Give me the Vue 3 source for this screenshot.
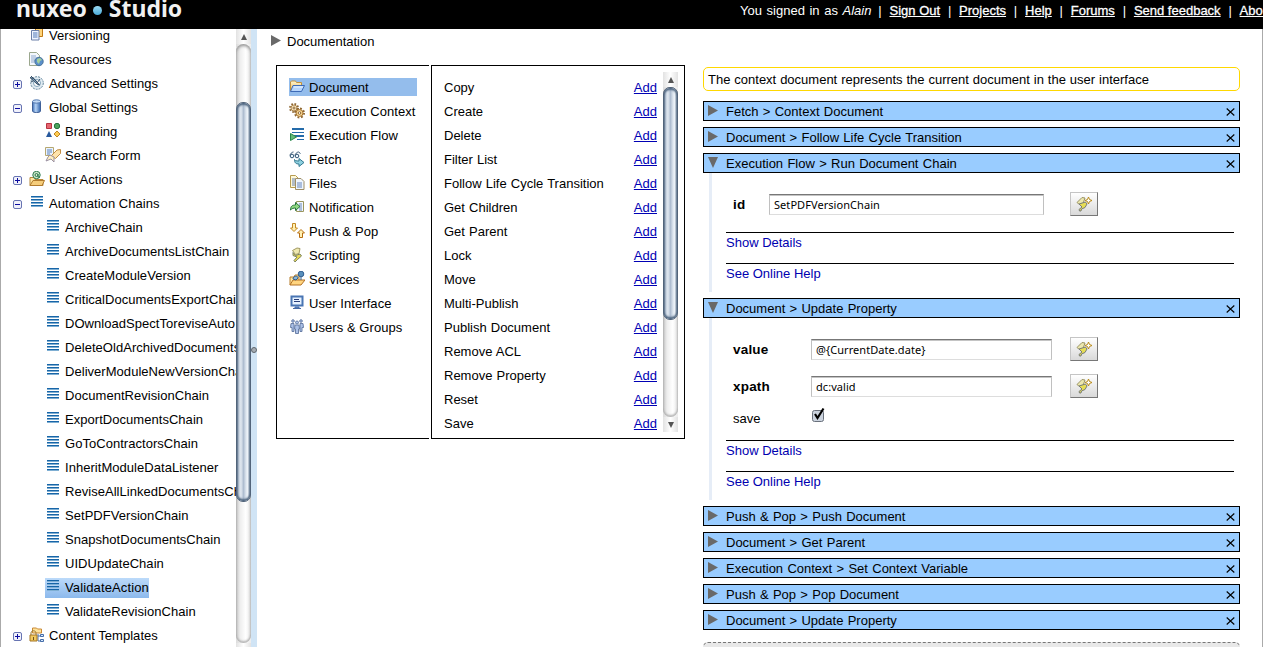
<script setup>
const tree = [
  { label: 'Versioning', icon: 'versioning', level: 1 },
  { label: 'Resources', icon: 'resources', level: 1 },
  { label: 'Advanced Settings', icon: 'compass', level: 1, toggle: 'plus' },
  { label: 'Global Settings', icon: 'cylinder', level: 1, toggle: 'minus' },
  { label: 'Branding', icon: 'branding', level: 2 },
  { label: 'Search Form', icon: 'search', level: 2 },
  { label: 'User Actions', icon: 'useractions', level: 1, toggle: 'plus' },
  { label: 'Automation Chains', icon: 'chain', level: 1, toggle: 'minus' },
  ...['ArchiveChain', 'ArchiveDocumentsListChain', 'CreateModuleVersion', 'CriticalDocumentsExportChain',
    'DOwnloadSpectToreviseAuto', 'DeleteOldArchivedDocuments', 'DeliverModuleNewVersionChain',
    'DocumentRevisionChain', 'ExportDocumentsChain', 'GoToContractorsChain', 'InheritModuleDataListener',
    'ReviseAllLinkedDocumentsChain', 'SetPDFVersionChain', 'SnapshotDocumentsChain', 'UIDUpdateChain',
    'ValidateAction', 'ValidateRevisionChain'].map(label => ({ label, icon: 'chain', level: 2 })),
  { label: 'Content Templates', icon: 'templates', level: 1, toggle: 'plus' },
]
const categories = [
  ['Document', 'folder'], ['Execution Context', 'gears'], ['Execution Flow', 'flow'], ['Fetch', 'fetch'],
  ['Files', 'files'], ['Notification', 'notification'], ['Push & Pop', 'pushpop'], ['Scripting', 'script'],
  ['Services', 'services'], ['User Interface', 'screen'], ['Users & Groups', 'users'],
]
const operations = ['Copy', 'Create', 'Delete', 'Filter List', 'Follow Life Cycle Transition', 'Get Children',
  'Get Parent', 'Lock', 'Move', 'Multi-Publish', 'Publish Document', 'Remove ACL', 'Remove Property', 'Reset', 'Save']
const links = ['Sign Out', 'Projects', 'Help', 'Forums', 'Send feedback', 'About']
const steps = [
  { title: 'Fetch > Context Document' },
  { title: 'Document > Follow Life Cycle Transition' },
  { title: 'Execution Flow > Run Document Chain', kind: 'single', fields: [['id', 'SetPDFVersionChain']] },
  { title: 'Document > Update Property', kind: 'multi', fields: [['value', '@{CurrentDate.date}'], ['xpath', 'dc:valid']], check: 'save' },
  { title: 'Push & Pop > Push Document' },
  { title: 'Document > Get Parent' },
  { title: 'Execution Context > Set Context Variable' },
  { title: 'Push & Pop > Pop Document' },
  { title: 'Document > Update Property' },
]
</script>

<template>
  <svg class="defs" width="0" height="0">
    <defs>
      <linearGradient id="gold" x1="0" y1="0" x2="0" y2="1"><stop offset="0" stop-color="#fff6d0" /><stop offset="1" stop-color="#e9b95c" /></linearGradient>
      <linearGradient id="blue" x1="0" y1="0" x2="1" y2="0"><stop offset="0" stop-color="#3d6fb8" /><stop offset=".4" stop-color="#b4d2f4" /><stop offset="1" stop-color="#3365ad" /></linearGradient>
    </defs>
    <symbol id="i-versioning" viewBox="0 0 16 16"><path d="M6.500.5h7v9h-7z" fill="#ffd47a" stroke="#c07a14" /><path d="M2.500 3.500h7.500v9.500h-7.500z" fill="#eef4ff" stroke="#6b7fa8" /><path d="M4 6h4.500M4 8h4.500M4 10h4.500" stroke="#4f76b5" /></symbol>
    <symbol id="i-resources" viewBox="0 0 16 16"><path d="M.5 1.500h7l3 3v10h-10z" fill="#f3f7fc" stroke="#9ba78d" /><path d="M2 5h5M2 7h6M2 9h4M2 11h3" stroke="#8fa9cf" /><circle cx="10" cy="10.500" r="4.200" fill="#5b8fca" stroke="#477299" /><path d="M8 8l3-1 2 2-2 1-1 3-2-2z" fill="#a3cf9b" /></symbol>
    <symbol id="i-compass" viewBox="0 0 16 16"><circle cx="8" cy="8" r="6.300" fill="#e0ebf2" stroke="#64869c" stroke-dasharray="2 1" /><circle cx="8" cy="8" r="3.500" fill="#fff" stroke="#84a5ba" /><path d="M1 2.500l4 1 5.500 6.500-2.500-1zM2 1l5 5M8 8l3-4M4 6l-2 1" stroke="#334e68" fill="#819fb8" /></symbol>
    <symbol id="i-cylinder" viewBox="0 0 16 16"><path d="M3.500 2.500v9.500c0 2 8 2 8 0V2.500" fill="url(#blue)" stroke="#3f6098" /><ellipse cx="7.500" cy="2.500" rx="4" ry="1.700" fill="#c1d9f5" stroke="#5379b0" /></symbol>
    <symbol id="i-branding" viewBox="0 0 16 16"><path d="M1.500.500h5v5h-5z" fill="#e56671" stroke="#b83240" /><circle cx="12" cy="3" r="2.700" fill="#4ca35d" stroke="#25733c" /><path d="M4 8l3 6H1z" fill="#28599d" /><path d="M12 8l3 3-3 3-3-3z" fill="#ffcc52" stroke="#bd8523" /></symbol>
    <symbol id="i-search" viewBox="0 0 16 16"><path d="M.5.5h8v8h-8z" fill="#eaf3ff" stroke="#b6a770" /><path d="M2 3h5M2 5h5M2 7h3" stroke="#5b80bb" /><path d="M6 9l6-6 3.500-.5v4l-5 5z" fill="#ffe3ab" stroke="#c18d43" /><path d="M3 10l-2 4 5-2 3 3v-5l-4-2z" fill="#fff0c0" stroke="#9b91a3" /></symbol>
    <symbol id="i-useractions" viewBox="0 0 16 16"><path d="M1 6.500h4l1 2h8v6H1z" fill="#ffe6a2" stroke="#b4873b" /><path d="M1 14.500l3-5h11.500l-2.500 5z" fill="#f5cd7b" stroke="#b17b2e" /><circle cx="7.500" cy="4" r="3.700" fill="#d5ead0" stroke="#28784a" /><circle cx="7.500" cy="4" r="1.500" fill="none" stroke="#28784a" /><path d="M9 3v3h2" fill="none" stroke="#28784a" /></symbol>
    <symbol id="i-chain" viewBox="0 0 16 16"><path d="M2 1h12v1H2zM2 4h12v1H2zM2 7h12v1H2zM2 10h12v1H2z" fill="#1765a8" /><path d="M2 2h12v1H2zM2 5h12v1H2zM2 8h12v1H2zM2 11h12v1H2z" fill="#7fafd3" /></symbol>
    <symbol id="i-templates" viewBox="0 0 16 16"><path d="M3.500 1h4l1 1h4v4h-9z" fill="#ffe29a" stroke="#c88936" /><path d="M9 7v7M9 9h4M9 14h4" stroke="#4e73aa" fill="none" /><path d="M11.500 7.500h3v2h-3zM11.500 12.500h3v2h-3z" fill="#d5e8ff" stroke="#456da8" /><path d="M2 9V6c0-3 5-3 5 0v3" fill="none" stroke="#9c7b31" /><path d="M1 8h7v6H1z" fill="#f2ca5e" stroke="#a37524" /><path d="M4 10h1v3H4z" fill="#70511f" /></symbol>
    <symbol id="i-folder" viewBox="0 0 16 16"><path d="M1.500 12V3l1-1h4l1 1.500h5V6" fill="url(#gold)" stroke="#c2913d" /><path d="M1.500 12.500L4 6.500h11.500l-3 6z" fill="#b6d5fc" stroke="#3d6ab6" /><path d="M5 8h9" stroke="#e8f4ff" /></symbol>
    <symbol id="i-gears" viewBox="0 0 16 16"><g fill="none" stroke="#8f6733"><circle cx="5" cy="5" r="4" stroke-width="2" stroke-dasharray="1.600 1.542" /><circle cx="5" cy="5" r="3" fill="#f5e2ba" stroke="#b08a52" /><circle cx="5" cy="5" r="1" fill="#fff" /><circle cx="10.500" cy="10" r="4.500" stroke-width="2" stroke-dasharray="1.800 1.734" /><circle cx="10.500" cy="10" r="3.500" fill="#f5d491" stroke="#a87632" /><circle cx="10.500" cy="10" r="1.300" fill="#fff" /></g></symbol>
    <symbol id="i-flow" viewBox="0 0 16 16"><path d="M3 1h12v2H3zM3 5h12v1H3zM5 8h10v2H5zM8 12h7v1H8z" fill="#246baa" /><path d="M1.500 6.500v7l6-3.500z" fill="#65ba78" stroke="#28894a" /></symbol>
    <symbol id="i-fetch" viewBox="0 0 16 16"><circle cx="3" cy="5" r="1.800" fill="#edf8ff" stroke="#355876" /><circle cx="8" cy="5" r="1.800" fill="#edf8ff" stroke="#355876" /><path d="M1 4.500C1 3 3 1 4.500 1M6 4.500C6 3 8 1 9.500 1l2 1.500" fill="none" stroke="#355876" /><path d="M5.500 8.500c0 1 1.500 1.500 4.500 1.500V7.500l5 4-5 4V13c-3 0-4.500-1-4.500-4.500z" fill="#8ed0df" stroke="#327991" /></symbol>
    <symbol id="i-files" viewBox="0 0 16 16"><path d="M1.500.500h5l3 3v9h-8z" fill="#fff9d9" stroke="#b79c50" /><path d="M3 4h3M3 6h3M3 8h3M3 10h3" stroke="#6680b3" /><path d="M6.500 3.500h5.500l3 3v8H6.500z" fill="#eff6ff" stroke="#9f8e66" /><path d="M8 8h5M8 10h5M8 12h5" stroke="#6685bb" /></symbol>
    <symbol id="i-notification" viewBox="0 0 16 16"><path d="M7.500 2.500h7v10h-7z" fill="#f3f8ff" stroke="#9a965e" /><path d="M10 5h3M10 7h3M10 9h3M10 11h3" stroke="#6787b6" /><path d="M1.500 11c0-4 2-5 5-5V3.500l4.500 4-4.500 4V9c-2 0-3.500.5-5 2z" fill="#8ed780" stroke="#28743b" /></symbol>
    <symbol id="i-pushpop" viewBox="0 0 16 16"><path d="M3.500.500h3v4.500h2L5 8.500 1.500 5h2z" fill="#fff0b3" stroke="#c58a23" /><path d="M10.500 14.500h3V10h2L12 6.500 8.500 10h2z" fill="#fff0b3" stroke="#b76f13" /></symbol>
    <symbol id="i-script" viewBox="0 0 16 16"><path d="M3.500 3.500L8 1l3 .500-1 5-3.500 1z" fill="#efe9b0" stroke="#a29a64" /><path d="M4 5.500l2.500 3 4.500-1.500 1.500 2-4 3.500-2.500 2.500-1-1.500 3-3.500-4-1.500z" fill="#e8d956" stroke="#7d8462" /></symbol>
    <symbol id="i-services" viewBox="0 0 16 16"><path d="M1 14V6h4l1-2h4v5" fill="#ffe5a1" stroke="#b77c2b" /><path d="M1 14l3-5h12l-4 5z" fill="#ffd580" stroke="#b37125" /><circle cx="12" cy="3" r="2.800" fill="#588fbc" stroke="#315e91" /><path d="M12 6v3M4 8c0-3 5-4 5-1l-2 2z" stroke="#315e91" fill="#8ab6d6" /></symbol>
    <symbol id="i-screen" viewBox="0 0 16 16"><path d="M2.500 1.500h11v9h-11z" fill="#e7f2ff" stroke="#4975b3" stroke-width="2" /><path d="M5 4.500h5M5 6.500h6" stroke="#293f7b" /><path d="M6 12h4v1H6zM4 13.500h8" fill="#6ba7de" stroke="#4469a5" /></symbol>
    <symbol id="i-users" viewBox="0 0 16 16"><g fill="#acc1e7" stroke="#60769f" stroke-width=".9"><circle cx="4" cy="2" r="1.300" /><circle cx="12" cy="2" r="1.300" /><path d="M2 4.500h3v8H3V8.500H1.500zM14 4.500h-3v8h2V8.500h1.500z" /><circle cx="8" cy="3.500" r="1.500" /><path d="M6 6h4l.5 4H9.500v4.500h-3V10h-1z" /></g></symbol>
    <symbol id="i-wand" viewBox="0 0 16 16"><path d="M1 6.500L6 1.500l3 .500-2 5.500-3.500 1z" fill="#ece7ae" stroke="#9a9464" /><path d="M3 8l6.500-2L11 8l-2 3.500-3.500 1.500L5 15H3.500L3 13.500l3-2.500z" fill="#e6dd55" stroke="#777b78" /><path d="M12.500 1L13.500 3.500l2.500 1-2.500 1-1 2.500-1-2.500L9 4.500l2.500-1z" fill="#fff" stroke="#b98b18" /></symbol>
  </svg>

  <div class="page">
    <header class="top">
      <div class="logo"><span class="nux">nuxeo</span><i class="dot"></i><span class="studio">Studio</span></div>
      <nav class="session">
        <span class="who">You signed in as <em>Alain</em></span>
        <template v-for="l in links" :key="l"><span class="sep">|</span><a>{{ l }}</a></template>
      </nav>
    </header>

    <div class="body">
      <aside class="tree">
        <div class="rows">
          <div v-for="n in tree" :key="n.label" class="node" :class="['l' + n.level, { selected: n.label === 'ValidateAction' }]">
            <span class="toggle"><svg v-if="n.toggle" width="9" height="9" viewBox="0 0 9 9"><rect x=".5" y=".5" width="8" height="8" rx="1.500" fill="#f0f1fb" stroke="#6774b2" /><path :d="n.toggle === 'plus' ? 'M2 4.500h5M4.500 2v5' : 'M2 4.500h5'" stroke="#0b0ba0" /></svg></span>
            <span class="entry"><svg class="ico" width="16" height="16"><use :href="'#i-' + n.icon" /></svg><span>{{ n.label }}</span></span>
          </div>
        </div>
      </aside>
      <div class="sb side"><span class="up"></span><div class="track"><div class="thumb"></div></div><span class="down"></span></div>
      <div class="splitter"><i></i></div>

      <main class="content">
        <section class="left">
          <div class="doc"><i class="tri"></i><span>Documentation</span></div>
          <div class="boxes">
            <div class="cats">
              <div v-for="c in categories" :key="c[0]" class="cat"><div class="catin" :class="{ on: c[0] === 'Document' }"><svg width="16" height="16"><use :href="'#i-' + c[1]" /></svg><span>{{ c[0] }}</span></div></div>
            </div>
            <div class="ops">
              <div class="oplist"><div v-for="o in operations" :key="o" class="op"><span>{{ o }}</span><a>Add</a></div></div>
              <div class="sb inner"><span class="up"></span><div class="track"><div class="thumb"></div></div><span class="down"></span></div>
            </div>
          </div>
        </section>

        <section class="chain">
          <div class="info">The context document represents the current document in the user interface</div>
          <div v-for="(s, k) in steps" :key="k" class="step">
            <div class="bar"><i class="tri" :class="{ open: s.kind }"></i><span>{{ s.title }}</span><svg class="close" width="9" height="8" viewBox="0 0 9 8"><path d="M.7.500L8.300 7.500M8.300.500L.7 7.500" stroke="#000" stroke-width="1.100" /></svg></div>
            <div v-if="s.kind" class="detail" :class="s.kind">
              <div class="fields">
                <div v-for="f in s.fields" :key="f[0]" class="field"><b>{{ f[0] }}</b><div class="input">{{ f[1] }}</div><div class="btn"><svg width="16" height="16"><use href="#i-wand" /></svg></div></div>
                <div v-if="s.check" class="check"><span>{{ s.check }}</span><svg width="15" height="16" viewBox="0 0 15 16"><rect x="1.500" y="3.500" width="11" height="11" rx="2" fill="#cbd3de" stroke="#6a717c" /><path d="M4 7L6.500 11 12.500 1.500" fill="none" stroke="#000" stroke-width="2.200" /></svg></div>
              </div>
              <div class="more">Show Details</div>
              <div class="more">See Online Help</div>
            </div>
          </div>
          <div class="drop"></div>
        </section>
      </main>
    </div>
  </div>
</template>

<style>
body { margin: 0; overflow: hidden; }
</style>
<style scoped>
* { box-sizing: border-box; }
.defs { position: absolute; }
.page { width: 1263px; height: 647px; overflow: hidden; background: #fff; font: 13px/24px "Liberation Sans", Arial, sans-serif; color: #000; display: flex; flex-direction: column; white-space: nowrap; }
.top { flex: 0 0 29px; height: 29px; background: #000; color: #fff; display: flex; overflow: hidden; }
.logo { width: 740px; flex: none; padding-left: 16px; display: flex; font: bold 23px/17px "Noto Sans", "Open Sans", sans-serif; color: #f1f1f1; }
.dot { width: 9px; height: 9px; border-radius: 50%; background: linear-gradient(#9cdaf2, #4aabd9); margin: 6px 7px 0 6px; }
.session { display: flex; font-size: 13px; line-height: 22px; flex: none; }
.who { width: 130.500px; word-spacing: 1px; }
.session a { text-decoration: underline; -webkit-text-stroke: .3px #fff; }
.sep { width: 19px; text-align: center; }
.body { flex: 1; display: flex; min-height: 0; border-left: 1px solid #aaa; border-right: 1px solid #aaa; }
.tree { width: 235px; overflow: hidden; flex: none; letter-spacing: .04px; }
.rows { margin-top: -5px; }
.node { height: 24px; display: flex; align-items: center; }
.toggle { width: 28px; padding-left: 12px; display: flex; flex: none; }
.l2 .toggle { width: 44px; }
.entry { display: flex; height: 20px; line-height: 20px; gap: 4px; }
.ico { margin-top: 1px; flex: none; }
.selected .entry { background: linear-gradient(#bcdafa, #8cb9ec); letter-spacing: .13px; }
.sb { width: 15px; flex: none; display: flex; flex-direction: column; background: linear-gradient(90deg, #dcdcdc, #f8f8f8 60%, #ececec); }
.up, .down { flex: 0 0 15px; display: flex; align-items: center; justify-content: center; background: linear-gradient(90deg, #e2e2e2, #fff 50%, #e2e2e2); }
.up::before, .down::before { content: ""; border: 3.500px solid transparent; border-top: 0; border-bottom: 6px solid #555; }
.down::before { transform: rotate(180deg); }
.track { flex: 1; border-radius: 8px; background: linear-gradient(90deg, #cfcfcf, #efefef 30%, #fff 65%, #e6e6e6); box-shadow: inset 0 2px 3px #999, inset 0 -2px 2px #bbb; }
.thumb { border-radius: 7px; border: 1px solid #52647a; box-shadow: inset 0 2px 2px #4f6680, inset 0 -2px 2px #4f6680; background: linear-gradient(90deg, #75879c, #c3cfdc 15%, #e2e9f1 30%, #aebdd0 50%, #dfe7f0 70%, #edf3f8 82%, #8292a6); }
.side .track { flex: 0 0 599px; }
.side .thumb { margin-top: 58px; height: 400px; }
.splitter { width: 6px; background: #d0e4f5; flex: none; display: flex; align-items: center; justify-content: center; }
.splitter i { width: 6px; height: 6px; flex: none; border-radius: 50%; background: #a6adb4; border: 1px solid #5f666d; margin-top: 24px; }
.content { flex: 1; display: flex; min-width: 0; padding-left: 14px; }
.left { width: 432px; flex: none; }
.tri { width: 10px; height: 11px; background: #696969; clip-path: polygon(0 0, 100% 50%, 0 100%); flex: none; }
.tri.open { clip-path: polygon(0 0, 100% 0, 50% 100%); }
.doc { display: flex; align-items: center; height: 24px; gap: 6px; }
.doc span { padding-top: 2px; }
.doc .tri { margin-top: -1px; }
.boxes { display: flex; padding: 12px 0 0 5px; gap: 2px; }
.cats { width: 153px; height: 374px; border: 1px solid #000; border-right: 0; padding: 9px 12px; letter-spacing: .06px; }
.cat { height: 24px; display: flex; align-items: center; }
.catin { display: flex; align-items: center; gap: 4px; height: 18px; line-height: 18px; width: 128px; flex: none; }
.catin span { padding-top: 2px; }
.catin svg { flex: none; }
.catin.on { background: #94bdec; }
.ops { width: 254px; height: 374px; border: 1px solid #000; display: flex; padding: 6px 6px 0 12px; }
.oplist { width: 219px; padding-top: 4px; height: 364px; word-spacing: .5px; }
.op { display: flex; justify-content: space-between; padding-right: 6px; }
.op a { color: #0000b4; text-decoration: underline; }
.inner { height: 360px; }
.inner .thumb { height: 233px; }
.chain { width: 537px; padding-top: 38px; }
.info { height: 24px; border: 1px solid #ffd800; border-radius: 5px; padding-left: 4px; line-height: 23px; margin-bottom: 10px; word-spacing: .3px; }
.step { margin-bottom: 6px; }
.bar { height: 20px; border: 1px solid #000; background: #9cf; display: flex; align-items: center; padding: 0 4px; line-height: 18px; word-spacing: .7px; }
.bar .tri { margin-right: 8px; margin-top: -1px; }
.bar span { flex: 1; padding-top: 2px; }
.close { margin-top: 1px; }
.detail { margin-left: 6px; border-left: 3px solid #e6edf7; padding: 19px 6px 0 14px; }
.single { height: 119px; margin-bottom: 6px; }
.multi { height: 182px; margin-bottom: 6px; }
.fields { height: 40px; padding-left: 7px; }
.multi .fields { height: 103px; }
.field { display: flex; height: 24px; align-items: center; margin-bottom: 13px; }
.field b { width: 36px; font-size: 13.500px; letter-spacing: .2px; padding-top: 1px; }
.input { width: 275px; height: 21px; border: 1px solid #c0c0c0; border-top-color: #777; border-bottom-color: #ddd; box-shadow: inset 0 1px 0 #c4c4c4; padding-left: 4px; font: 11px/20px "Noto Sans", "Open Sans", sans-serif; letter-spacing: .06px; margin-right: 26px; }
.multi b { width: 78px; }
.multi .input { width: 241px; margin-right: 18px; }
.btn { width: 28px; height: 24px; border: 1px solid #c5c5c5; border-right-color: #777; border-bottom-color: #777; background: linear-gradient(#fff, #d9d9d9); display: flex; align-items: center; justify-content: center; }
.check { display: flex; height: 24px; line-height: 26px; margin-top: -5px; }
.check span { width: 78px; }
.check svg { margin-top: 1px; }
.more { height: 31px; border-top: 1px solid #000; line-height: 20px; color: #0000b0; }
.drop { margin-top: 12px; height: 40px; border: 1px dashed #777; border-radius: 5px; background: #e8e8e8; }
</style>
